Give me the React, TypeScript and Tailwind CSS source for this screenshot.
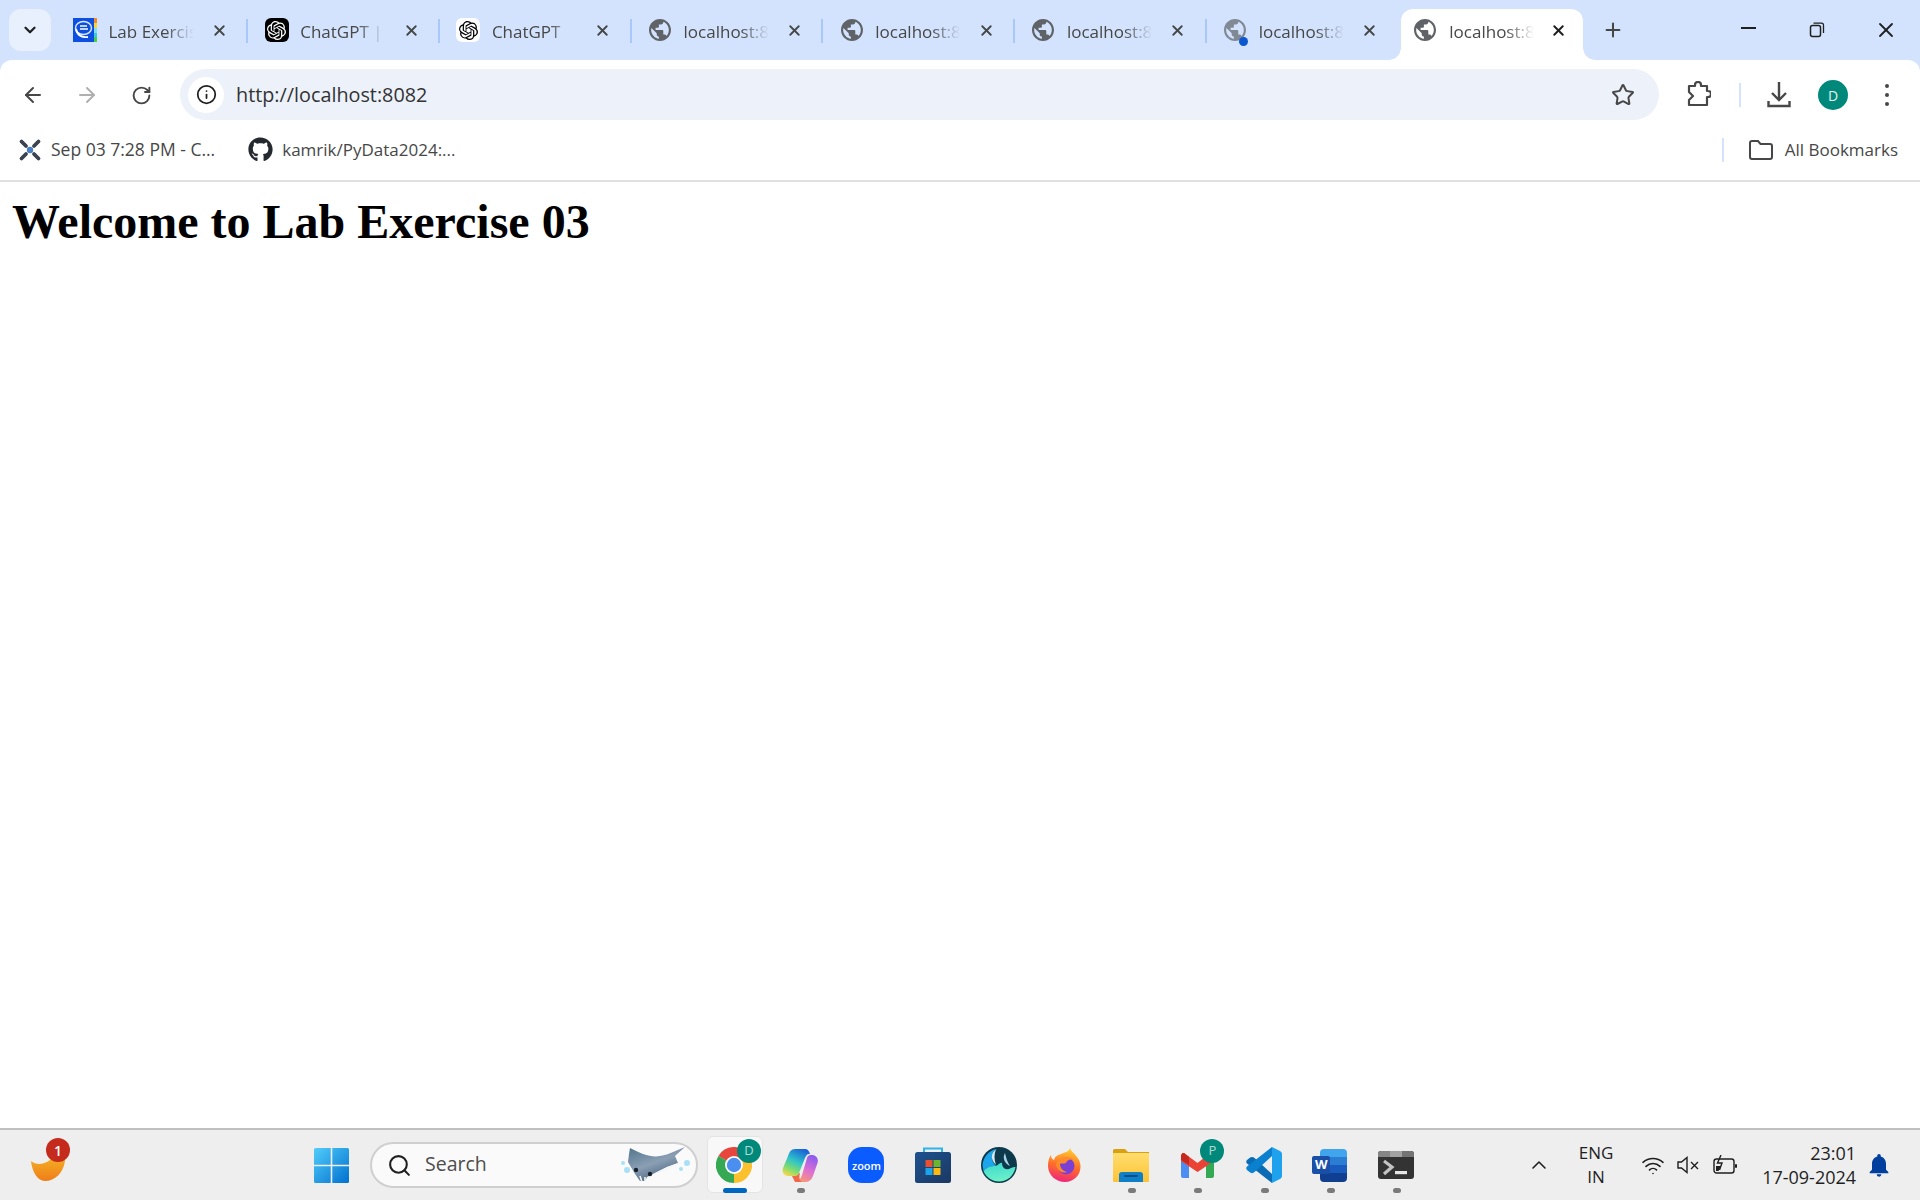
import React from "react";
import { ArrowLeft, ArrowRight, RotateCw, Star, ChevronDown, ChevronUp, X, Plus, Info, Search, Wifi } from "lucide-react";
import { SiOpenai } from "react-icons/si";
import { FaGithub } from "react-icons/fa";
import { MdNotifications } from "react-icons/md";

const GLOBE = "M12 2C6.48 2 2 6.48 2 12s4.48 10 10 10 10-4.48 10-10S17.52 2 12 2zm-1 17.93c-3.95-.49-7-3.85-7-7.93 0-.62.08-1.21.21-1.79L9 15v1c0 1.1.9 2 2 2v1.93zm6.9-2.54c-.26-.81-1-1.39-1.9-1.39h-1v-3c0-.55-.45-1-1-1H8v-2h2c.55 0 1-.45 1-1V7h2c1.1 0 2-.9 2-2v-.41c2.93 1.19 5 4.06 5 7.41 0 2.08-.8 3.97-2.1 5.39z";

function Globe({ dim }: { dim?: boolean }) {
  return (
    <svg viewBox="2 2 20 20" className={dim ? "w-[22px] h-[22px] opacity-70" : "w-[22px] h-[22px]"}>
      <path d={GLOBE} fill="#5f6368" />
    </svg>
  );
}

function LabIcon() {
  return (
    <svg viewBox="0 0 24 24" className="w-6 h-6">
      <rect width="24" height="24" fill="#0d4fe0" />
      <rect x="21" width="3" height="5" fill="#f08a2c" />
      <rect x="21" y="5" width="3" height="5" fill="#f5d33c" />
      <rect x="21" y="10" width="3" height="5" fill="#7fe0f5" />
      <rect x="21" y="15" width="3" height="4" fill="#38c8e8" />
      <rect x="21" y="19" width="3" height="5" fill="#45d24a" />
      <ellipse cx="10.5" cy="10" rx="8" ry="6.5" fill="none" stroke="#dbe8ff" strokeWidth="1.4" />
      <path d="M3 11c1 6 6 9 12 8" fill="none" stroke="#ffffff" strokeWidth="1.8" />
      <path d="M7 8h7M7 11h8" stroke="#ffffff" strokeWidth="1.3" />
    </svg>
  );
}

function GptIcon({ dark }: { dark?: boolean }) {
  return (
    <span className={dark ? "w-6 h-6 rounded-md bg-black text-white flex items-center justify-center" : "w-6 h-6 rounded-md bg-white text-black flex items-center justify-center"}>
      <SiOpenai size={19} />
    </span>
  );
}

function Tab({ icon, title, last }: { icon: React.ReactNode; title: string; last?: boolean }) {
  return (
    <div className="relative w-[191.7px] h-[42px] flex items-center pl-[16.5px] shrink-0">
      <span className="w-6 h-6 flex items-center justify-center shrink-0 relative">{icon}</span>
      <span className="ml-[11.5px] mt-[3px] w-[85px] whitespace-nowrap overflow-hidden text-[17px] text-[#474747] [mask-image:linear-gradient(to_right,black_66%,transparent_100%)]">{title}</span>
      <span className="ml-[16px] w-5 flex justify-center text-[#444746]"><X size={17} strokeWidth={2.6} /></span>
      {!last && <span className="absolute right-0 top-[10px] h-6 w-0.5 bg-[#a8c7fa]" />}
    </div>
  );
}

function ActiveTab() {
  return (
    <div className="relative w-[182px] h-[51px] ml-[3px] flex items-start pt-[9px] pl-[13px] bg-white rounded-t-[12px] shrink-0">
      <span className="absolute -left-3 bottom-0 w-3 h-3 bg-[radial-gradient(circle_at_0_0,transparent_11.5px,white_12px)]" />
      <span className="absolute -right-3 bottom-0 w-3 h-3 bg-[radial-gradient(circle_at_100%_0,transparent_11.5px,white_12px)]" />
      <span className="w-[22px] h-6 flex items-center justify-center shrink-0"><Globe /></span>
      <span className="ml-[13px] mt-[2px] w-[85px] whitespace-nowrap overflow-hidden text-[17px] text-[#474747] leading-6 [mask-image:linear-gradient(to_right,black_66%,transparent_100%)]">localhost:8082</span>
      <span className="ml-[14px] w-5 h-6 flex items-center justify-center text-[#1f1f1f]"><X size={17} strokeWidth={2.8} /></span>
    </div>
  );
}

function Chrome() {
  return (
    <svg viewBox="0 0 36 36" className="w-9 h-9">
      <path d="M18 18L2.4 9A18 18 0 0 1 33.6 9Z" fill="#e8453c" />
      <path d="M18 18L33.6 9A18 18 0 0 1 18 36Z" fill="#fbc02d" />
      <path d="M18 18L18 36A18 18 0 0 1 2.4 9Z" fill="#34a853" />
      <circle cx="18" cy="18" r="9" fill="#ffffff" />
      <circle cx="18" cy="18" r="7.2" fill="#4a8ff0" />
    </svg>
  );
}

function Copilot() {
  return (
    <svg viewBox="0 0 36 33" className="w-9 h-[33px]">
      <defs>
        <linearGradient id="cpa" x1="0.7" y1="0" x2="0.2" y2="1">
          <stop offset="0" stopColor="#1a63d8" />
          <stop offset="0.45" stopColor="#2fc4c8" />
          <stop offset="0.75" stopColor="#7fdc70" />
          <stop offset="1" stopColor="#f6d84a" />
        </linearGradient>
        <linearGradient id="cpb" x1="0.7" y1="0" x2="0.3" y2="1">
          <stop offset="0" stopColor="#8a5cf0" />
          <stop offset="0.55" stopColor="#e070d0" />
          <stop offset="1" stopColor="#f79a70" />
        </linearGradient>
      </defs>
      <path d="M23 33H13C17 33 19 29 20 26L25 9C26 6 28 6 29 6H30C34 6 37 10 35.5 14L31 27C29.5 31 27 33 23 33Z" fill="url(#cpb)" />
      <path d="M10 27L13 33H20C17 31 17 28 18 24Z" fill="#f2674a" />
      <path d="M13 0H23C26 0 27 2 28 5H27C25 5 24 7 23 9L17 24C16 27 14 27 12 27H6C2 27 -0.5 23 1 19L6 7C7.5 3 9 0 13 0Z" fill="url(#cpa)" />
    </svg>
  );
}

function ZoomIcon() {
  return (
    <span className="w-9 h-9 rounded-[14px] bg-[#0b5cff] text-white text-[11px] font-semibold flex items-center justify-center leading-none">zoom</span>
  );
}

function Store() {
  return (
    <svg viewBox="0 0 36 36" className="w-9 h-9">
      <defs>
        <linearGradient id="st" x1="0" y1="0" x2="1" y2="1">
          <stop offset="0" stopColor="#1d5290" />
          <stop offset="1" stopColor="#1b3862" />
        </linearGradient>
      </defs>
      <path d="M9 6V1.5H27V6" fill="none" stroke="#2fb4e9" strokeWidth="2" />
      <rect y="5" width="36" height="31" rx="2.5" fill="url(#st)" />
      <rect x="10.5" y="13" width="7" height="7" fill="#e8502f" />
      <rect x="18.5" y="13" width="7" height="7" fill="#6cb52d" />
      <rect x="10.5" y="21" width="7" height="7" fill="#1aa5ea" />
      <rect x="18.5" y="21" width="7" height="7" fill="#fdb813" />
    </svg>
  );
}

function Round() {
  return (
    <svg viewBox="0 0 36 36" className="w-9 h-9">
      <defs>
        <linearGradient id="rd" x1="0" y1="0" x2="0.2" y2="1">
          <stop offset="0" stopColor="#38d8d0" />
          <stop offset="1" stopColor="#6cf0c8" />
        </linearGradient>
      </defs>
      <circle cx="18" cy="18" r="18" fill="#0c3a4c" />
      <path d="M1.5 18C2.5 9 9 3 15.5 2C10 6 9 13 15 19C10 19 5 21 2.5 24Z" fill="#1ea4ea" />
      <path d="M2.5 24C6 20 10 19 14 19C17 19 19 15 21 16C21 21 25 24 30 21C32 20 33 20 34.5 20C33 29 26 34.5 18 34.5C11 34.5 5 30 2.5 24Z" fill="url(#rd)" />
      <path d="M15 2.5C10 6 9 12 15 18C13 12 13 7 15 2.5Z" fill="#d8e9f0" />
      <path d="M24 6C21 11 24 17 29 19C26 15 25 10 24 6Z" fill="#a9d3e6" />
    </svg>
  );
}

function Firefox() {
  return (
    <svg viewBox="0 0 34 34" className="w-[34px] h-[34px]">
      <defs>
        <linearGradient id="ffa" x1="0.6" y1="0" x2="0.4" y2="1">
          <stop offset="0" stopColor="#ffcf2e" />
          <stop offset="0.55" stopColor="#ff6a2a" />
          <stop offset="1" stopColor="#f0247e" />
        </linearGradient>
      </defs>
      <path d="M22 0C23 4 28 6 31 12C36 23 28 34 17 34C8 34 0 27 0 18C0 13 1 10 3 7C3 10 4 11 6 12C7 8 10 7 13 6C16 4.5 21 4 22 0Z" fill="url(#ffa)" />
      <circle cx="18" cy="18" r="8.5" fill="#7b3fd2" />
      <path d="M8 16C11 8 20 7 27 12C22 10.5 19 12 18 15C15 16 13 15 12 16C12 19 14 23 19 24C14 26 8 22 8 16Z" fill="#ff8a2a" />
    </svg>
  );
}

function Explorer() {
  return (
    <svg viewBox="0 0 36 33" className="w-9 h-[33px]">
      <defs>
        <linearGradient id="ex" x1="0" y1="0" x2="0" y2="1">
          <stop offset="0" stopColor="#ffdd6e" />
          <stop offset="1" stopColor="#fdc335" />
        </linearGradient>
      </defs>
      <path d="M0 1.5A1.5 1.5 0 0 1 1.5 0H12L15 3H36V10H0Z" fill="#d9a10f" />
      <rect y="4" width="36" height="29" rx="1" fill="url(#ex)" />
      <path d="M6 33V26A3 3 0 0 1 9 23H27A3 3 0 0 1 30 26V33Z" fill="#0f7fc8" />
      <rect x="11" y="26" width="14" height="2" rx="1" fill="#0a4f86" />
    </svg>
  );
}

function Gmail() {
  return (
    <svg viewBox="0 0 33 25" className="w-[33px] h-[25px]">
      <path d="M0 7L8 12V25H2A2 2 0 0 1 0 23Z" fill="#4b8df0" />
      <path d="M33 7L25 12V25H31A2 2 0 0 0 33 23Z" fill="#34a853" />
      <path d="M3 0L16.5 10L28 1C31 -1 33 1 33 4V8L16.5 19L0 8V4C0 1 1.5 -0.5 3 0Z" fill="#ea4335" />
      <path d="M3 0L8 4V12L0 7V4C0 1 1.5 -0.5 3 0Z" fill="#c5281e" />
    </svg>
  );
}

function VSCode() {
  return (
    <svg viewBox="0 0 36 36" className="w-9 h-9">
      <path d="M26 36L26 27L8.5 11C7 9.5 5 9.5 3.5 11L1 13C0 14 0 15.5 1 16.5Z" fill="#0a6cb5" />
      <path d="M26 0L26 9L8.5 25C7 26.5 5 26.5 3.5 25L1 23C0 22 0 20.5 1 19.5Z" fill="#0a80cf" />
      <path d="M26 0L34 4C35.5 4.8 36 6 36 7V29C36 30 35.5 31.2 34 32L26 36Z" fill="#1fa2ee" />
    </svg>
  );
}

function Word() {
  return (
    <span className="relative w-[35px] h-[33px] block">
      <span className="absolute left-2 top-0 right-0 bottom-0 rounded-sm overflow-hidden flex flex-col">
        <span className="flex-1 bg-[#41a5ee]" />
        <span className="flex-1 bg-[#2b7cd3]" />
        <span className="flex-1 bg-[#185abd]" />
        <span className="flex-1 bg-[#103f91]" />
      </span>
      <span className="absolute left-0 top-[7px] w-[18px] h-[18px] rounded-[2px] bg-[#1a4fa8] text-white text-[13px] font-bold flex items-center justify-center leading-none">W</span>
    </span>
  );
}

function Terminal() {
  return (
    <svg viewBox="0 0 36 28" className="w-9 h-7">
      <rect width="36" height="28" rx="3" fill="#333333" />
      <path d="M0 3A3 3 0 0 1 3 0H12V6H0Z" fill="#858585" />
      <rect x="12" width="12" height="6" fill="#a3a3a3" />
      <path d="M24 0H33A3 3 0 0 1 36 3V6H24Z" fill="#747474" />
      <path d="M6 10L14 16L6 23" fill="none" stroke="#c4c4c4" strokeWidth="3.2" />
      <rect x="17" y="20" width="12" height="3.2" fill="#e6e6e6" />
    </svg>
  );
}

function Manta() {
  return (
    <svg viewBox="0 0 71 37" className="w-[71px] h-[37px]">
      <defs>
        <linearGradient id="mt" x1="0.1" y1="0" x2="0.7" y2="1">
          <stop offset="0" stopColor="#54778f" />
          <stop offset="0.5" stopColor="#8b9fb4" />
          <stop offset="1" stopColor="#3e5a75" />
        </linearGradient>
      </defs>
      <path d="M10 1C14 3 18 5 23 7C29 9 35 10 40 9C45 8 49 7 53 5L65 0L55 9L58 16L47 20L33 27L27 30L25 34H20L15 27L8 15L9 7Z" fill="url(#mt)" strokeLinejoin="round" />
      <path d="M58 16L47 20L33 27L38 26C46 25 52 21 58 16Z" fill="#f4f6f8" />
      <path d="M20 29L22 35M25 30L25 35" stroke="#f4f6f8" strokeWidth="1.6" />
      <circle cx="16" cy="23" r="2.2" fill="#16202e" />
      <circle cx="30" cy="27" r="2.2" fill="#16202e" />
      <circle cx="3" cy="16" r="2" fill="#a9e0f5" />
      <circle cx="7" cy="23" r="3" fill="#a9e0f5" />
      <circle cx="67" cy="16" r="3" fill="#a9e0f5" />
      <circle cx="61" cy="22" r="2" fill="#a9e0f5" />
    </svg>
  );
}

function Slot({ children, dot, active, badge, ring }: { children: React.ReactNode; dot?: boolean; active?: boolean; badge?: string; ring?: boolean }) {
  return (
    <div className="relative w-[66.2px] h-full flex items-center justify-center shrink-0">
      {ring && <span className="absolute left-[6px] top-[6px] w-[56px] h-[57px] rounded-md bg-[#f8f8f8] border border-[#e4e4e4]" />}
      <span className="relative flex items-center justify-center">{children}</span>
      {badge && (
        <span className="absolute left-[36px] top-[9px] w-6 h-6 rounded-full bg-[#00897b] text-white/70 text-[13px] flex items-center justify-center">{badge}</span>
      )}
      {dot && <span className="absolute left-[30px] bottom-[7px] w-2 h-[5px] rounded-full bg-[#7a7a7a]" />}
      {active && <span className="absolute left-[22px] bottom-[7px] w-6 h-[5px] rounded-full bg-[#0067c0]" />}
    </div>
  );
}

export default function App() {
  return (
    <div className="w-[1920px] h-[1200px] flex flex-col bg-white overflow-hidden font-['Open_Sans','Noto_Sans',sans-serif]">
      <div className="bg-[#d3e3fd] shrink-0">
        <div className="h-[60px] flex items-start">
          <button className="ml-[9px] mt-[9px] w-[42px] h-[42px] rounded-[12px] bg-[#e8f0fe] flex items-center justify-center text-[#1f1f1f] shrink-0">
            <ChevronDown size={18} strokeWidth={3} />
          </button>
          <div className="ml-[5.5px] mt-[9px] flex items-start">
            <Tab icon={<LabIcon />} title="Lab Exercise 03" />
            <Tab icon={<GptIcon dark />} title="ChatGPT | OpenAI" />
            <Tab icon={<GptIcon />} title="ChatGPT" />
            <Tab icon={<Globe />} title="localhost:8080" />
            <Tab icon={<Globe />} title="localhost:8081" />
            <Tab icon={<Globe />} title="localhost:8083" />
            <Tab
              icon={
                <>
                  <Globe dim />
                  <span className="absolute left-[16px] top-[19px] w-[9px] h-[9px] rounded-full bg-[#0b57d0]" />
                </>
              }
              title="localhost:8084"
              last
            />
            <ActiveTab />
          </div>
          <span className="ml-[18px] mt-[18px] w-6 h-6 flex items-center justify-center text-[#444746]"><Plus size={22} strokeWidth={2.2} /></span>
          <span className="ml-[111px] mt-[18px] w-6 h-6 flex items-center justify-center">
            <span className="w-[15px] h-[2px] bg-[#1f1f1f] -mt-1" />
          </span>
          <span className="ml-[45px] mt-[18px] w-6 h-6 flex items-center justify-center">
            <svg viewBox="0 0 16 16" className="w-4 h-4">
              <rect x="1.5" y="3.5" width="10" height="11" rx="2" fill="none" stroke="#1f1f1f" strokeWidth="1.5" />
              <path d="M4.5 1.2H12.5A2 2 0 0 1 14.5 3.2V11" fill="none" stroke="#1f1f1f" strokeWidth="1.3" />
            </svg>
          </span>
          <span className="ml-[45px] mt-[18px] w-6 h-6 flex items-center justify-center text-[#1f1f1f]"><X size={24} strokeWidth={1.8} /></span>
        </div>
        <div className="bg-white rounded-t-[12px] h-[69px] flex items-start pt-[9px]">
          <span className="ml-[21px] mt-[14px] w-6 h-6 flex items-center justify-center text-[#474747]"><ArrowLeft size={24} strokeWidth={2} /></span>
          <span className="ml-[30px] mt-[14px] w-6 h-6 flex items-center justify-center text-[#b0b0b0]"><ArrowRight size={24} strokeWidth={2} /></span>
          <span className="ml-[30px] mt-[14px] w-6 h-6 flex items-center justify-center text-[#474747]"><RotateCw size={21} strokeWidth={2.2} /></span>
          <div className="ml-[27px] w-[1479px] h-[51px] rounded-full bg-[#ecf1fa] flex items-center pl-2 shrink-0">
            <span className="w-9 h-9 rounded-full bg-white flex items-center justify-center text-[#1f1f1f]"><Info size={21} strokeWidth={2} /></span>
            <span className="ml-[12px] text-[19.8px] text-[#333333]">http://localhost:8082</span>
            <span className="ml-auto mr-[24px] text-[#474747]"><Star size={24} strokeWidth={2} /></span>
          </div>
          <svg viewBox="0 0 24 26" className="ml-[28px] mt-[12px] w-6 h-[26px] shrink-0">
            <path d="M2 5H8V4A3 3 0 0 1 14 4V5H20V10H21A3 3 0 0 1 21 16H20V24H2V19L6 15L2 11Z" fill="none" stroke="#474747" strokeWidth="2.2" strokeLinejoin="round" />
          </svg>
          <span className="ml-[28px] mt-[14px] w-0.5 h-6 bg-[#d3e3fd]" />
          <span className="ml-[26px] mt-[11px] w-6 h-7 flex items-center justify-center">
            <svg viewBox="0 0 24 28" className="w-6 h-7">
              <path d="M12 2V19M5 13L12 20L19 13" fill="none" stroke="#474747" strokeWidth="2.4" />
              <path d="M1.5 21V26H22.5V21" fill="none" stroke="#474747" strokeWidth="2.4" />
            </svg>
          </span>
          <span className="ml-[27px] mt-[11px] w-[30px] h-[30px] rounded-full bg-[#00897b] text-white/90 text-[14px] flex items-center justify-center">D</span>
          <span className="ml-[37px] mt-[14px] w-1 h-6 flex flex-col justify-between items-center py-[1px]">
            <span className="w-1 h-1 rounded-full bg-[#474747]" />
            <span className="w-1 h-1 rounded-full bg-[#474747]" />
            <span className="w-1 h-1 rounded-full bg-[#474747]" />
          </span>
        </div>
      </div>
      <div className="h-[41px] pb-[10px] flex items-center border-b-2 border-[#e0e0e0] box-content shrink-0 text-[17px] text-[#474747]">
        <svg viewBox="0 0 24 24" className="ml-[18px] w-6 h-6 shrink-0">
          <path d="M3.5 3.5L8 8M20.5 3.5L16 8M3.5 20.5L8 16M20.5 20.5L16 16" stroke="#39424e" strokeWidth="3.8" strokeLinecap="round" />
          <circle cx="12" cy="12" r="3.2" fill="#4a7fc8" />
        </svg>
        <span className="ml-[9px] whitespace-nowrap text-[17.5px]">Sep 03 7:28 PM - C...</span>
        <span className="ml-[33px] text-[#24292f]"><FaGithub size={25} /></span>
        <span className="ml-[9px] whitespace-nowrap">kamrik/PyData2024:...</span>
        <span className="ml-auto h-6 w-0.5 bg-[#d3e3fd]" />
        <svg viewBox="0 0 24 20" className="ml-[25px] w-6 h-5">
          <path d="M1 3A2 2 0 0 1 3 1H9L11.5 4H21A2 2 0 0 1 23 6V17A2 2 0 0 1 21 19H3A2 2 0 0 1 1 17Z" fill="none" stroke="#474747" strokeWidth="2" />
        </svg>
        <span className="ml-[12px] mr-[22px] whitespace-nowrap">All Bookmarks</span>
      </div>
      <main className="flex-1 pl-3 pt-[12px]">
        <h1 className="font-['Liberation_Serif',serif] font-bold text-[48px] leading-[55px] text-black">Welcome to Lab Exercise 03</h1>
      </main>
      <div className="h-[72px] shrink-0 border-t-2 border-[#bfbfbf] bg-[#eeeeee] flex items-center">
        <div className="relative w-[298px] h-full shrink-0">
          <svg viewBox="0 0 34 28" className="absolute left-[31px] top-[23px] w-[34px] h-7">
            <defs>
              <linearGradient id="mn" x1="0.5" y1="0" x2="0.5" y2="1">
                <stop offset="0" stopColor="#f6b726" />
                <stop offset="1" stopColor="#ee7d1a" />
              </linearGradient>
            </defs>
            <path d="M0 8C5 12 14 13 22 4L34 0C36 16 26 28 14 28C6 28 1 18 0 8Z" fill="url(#mn)" />
          </svg>
          <span className="absolute left-[46px] top-[8px] w-6 h-6 rounded-full bg-[#c42b1c] text-white text-[14px] font-semibold flex items-center justify-center">1</span>
        </div>
        <div className="w-[66px] h-full flex items-center justify-center shrink-0">
          <svg viewBox="0 0 35 35" className="w-[35px] h-[35px]">
            <defs>
              <linearGradient id="win" x1="0" y1="0" x2="1" y2="1">
                <stop offset="0" stopColor="#52cdfa" />
                <stop offset="1" stopColor="#0070cf" />
              </linearGradient>
            </defs>
            <path d="M1.5 0H16.7V16.7H0V1.5A1.5 1.5 0 0 1 1.5 0ZM18.3 0H33.5A1.5 1.5 0 0 1 35 1.5V16.7H18.3ZM0 18.3H16.7V35H1.5A1.5 1.5 0 0 1 0 33.5ZM18.3 18.3H35V33.5A1.5 1.5 0 0 1 33.5 35H18.3Z" fill="url(#win)" />
          </svg>
        </div>
        <div className="ml-[6px] mr-[3px] w-[328px] h-[46px] rounded-full bg-[#fafafa] border-2 border-[#cfcfcf] flex items-center shrink-0">
          <span className="ml-[15px] text-[#1f1f1f]"><Search size={25} strokeWidth={2} /></span>
          <span className="ml-[13px] -mt-0.5 text-[19.5px] text-[#4d4d4d]">Search</span>
          <span className="ml-auto mr-[5px] flex"><Manta /></span>
        </div>
        <Slot ring active badge="D"><Chrome /></Slot>
        <Slot dot><Copilot /></Slot>
        <Slot><ZoomIcon /></Slot>
        <Slot><Store /></Slot>
        <Slot><Round /></Slot>
        <Slot><Firefox /></Slot>
        <Slot dot><Explorer /></Slot>
        <Slot dot badge="P"><Gmail /></Slot>
        <Slot dot><VSCode /></Slot>
        <Slot dot><Word /></Slot>
        <Slot dot><Terminal /></Slot>
        <span className="ml-[98px] w-6 flex justify-center text-[#1f1f1f]"><ChevronUp size={24} strokeWidth={1.6} /></span>
        <div className="ml-5 w-[50px] text-center text-[17px] leading-6 text-[#1f1f1f]">ENG<br />IN</div>
        <span className="ml-5 w-6 flex justify-center text-[#1f1f1f]"><Wifi size={25} strokeWidth={1.6} /></span>
        <svg viewBox="0 0 23 18" className="ml-3 w-[23px] h-[18px]">
          <path d="M1 6H4.5L10 1.5V16.5L4.5 12H1Z" fill="none" stroke="#1f1f1f" strokeWidth="1.4" />
          <path d="M14 6L21 13M21 6L14 13" stroke="#1f1f1f" strokeWidth="1.4" />
        </svg>
        <svg viewBox="0 0 24 20" className="ml-[13px] w-6 h-5">
          <rect x="1" y="4" width="20" height="14" rx="2.5" fill="none" stroke="#1f1f1f" strokeWidth="1.4" />
          <rect x="22" y="9" width="2" height="4" rx="1" fill="#1f1f1f" />
          <path d="M3 16V11H8L5.5 16Z" fill="#1f1f1f" />
          <path d="M8 0L4.5 8H9L6.5 15" fill="none" stroke="#1f1f1f" strokeWidth="1.4" />
        </svg>
        <div className="ml-[19px] w-[100px] text-right text-[18px] leading-6 text-[#1f1f1f] whitespace-nowrap flex flex-col items-end">
          <span>23:01</span>
          <span>17-09-2024</span>
        </div>
        <span className="ml-[9px] text-[#003f9e]"><MdNotifications size={28} /></span>
      </div>
    </div>
  );
}
